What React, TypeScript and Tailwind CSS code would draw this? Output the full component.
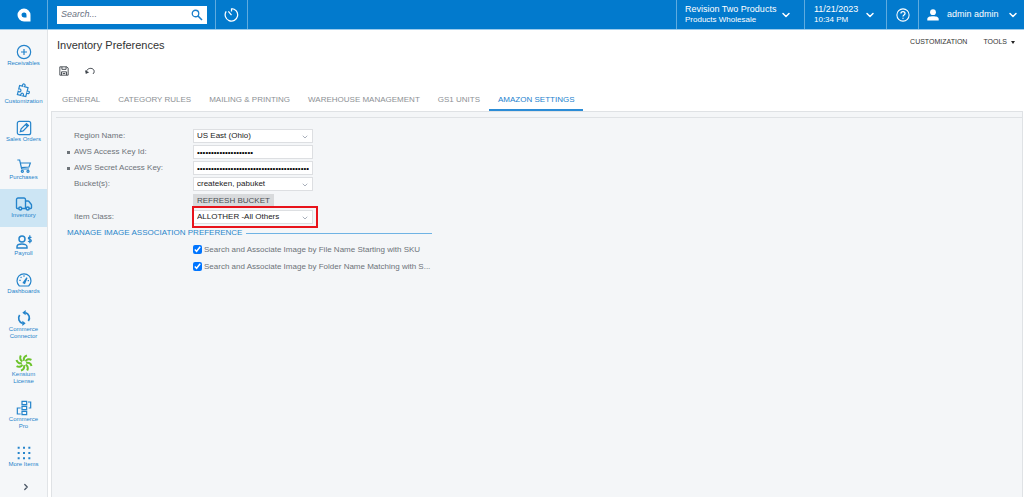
import React from "react";
import { ChevronDown, ChevronRight, Truck } from "lucide-react";

interface IconProps {
  children: React.ReactNode;
  className?: string;
}

function Icon({ children, className = "size-4" }: IconProps) {
  return (
    <svg
      viewBox="0 0 24 24"
      fill="none"
      stroke="currentColor"
      strokeWidth="1.8"
      className={className}
      aria-hidden="true"
    >
      {children}
    </svg>
  );
}

const modules = [
  {
    label: "Receivables",
    icon: (
      <Icon>
        <circle cx="12" cy="12" r="10" />
        <path d="M12 7.5v9M7.5 12h9" />
      </Icon>
    ),
  },
  {
    label: "Customization",
    icon: (
      <Icon>
        <path
          d="M4 7h4.500C6 2 14 2 11.500 7H17v5.500c5-2.500 5 5.500 0 3V21h-4.500c2.500-5-5.500-5-3 0H4v-5c5 2.500 5-6 0-3.500z"
          transform="rotate(14 12 12)"
        />
      </Icon>
    ),
  },
  {
    label: "Sales Orders",
    icon: (
      <Icon>
        <rect x="2" y="2" width="20" height="20" rx="3" />
        <path d="M6.5 17.5l1.2-4.2 8-8 3 3-8 8z" />
        <path d="M14.5 6.5l3 3" strokeWidth="3" />
      </Icon>
    ),
  },
  {
    label: "Purchases",
    icon: (
      <Icon>
        <path d="M2 3h3.5l3 13.5h11M6.5 7.5h15l-2 6-11.5 1" />
        <circle cx="9.5" cy="20" r="1.6" />
        <circle cx="18" cy="20" r="1.6" />
      </Icon>
    ),
  },
  {
    label: "Inventory",
    active: true,
    icon: <Truck className="size-[18px]" strokeWidth={1.8} />,
  },
  {
    label: "Payroll",
    icon: (
      <Icon>
        <circle cx="9" cy="7.5" r="4.5" strokeWidth="2.2" />
        <path d="M1.5 21v-2c0-3 4-4 7.500-4s7.500 1 7.500 4v2z" strokeWidth="2.2" />
        <path d="M23 5.500c-.5-1.200-4.500-1.500-4.500.7 0 2.500 4.500 1.300 4.500 3.800 0 2.300-4 2-4.800.6M20.700 2v12" />
      </Icon>
    ),
  },
  {
    label: "Dashboards",
    icon: (
      <Icon>
        <path d="M5 21a10.500 10.500 0 1 1 14 0z" />
        <path d="M11 16l5.500-7.500L13 17z" />
        <path d="M12 5v2M5 12.500h2M17.500 13h2M7 7.500l1.200 1.200" />
      </Icon>
    ),
  },
  {
    label: "Commerce Connector",
    icon: (
      <Icon>
        <path d="M10 20A8 8 0 0 1 5.500 7.500M14 4A8 8 0 0 1 18.500 16.500" strokeWidth="2.6" />
        <path d="M14.500 0v8L9.500 4zM9.500 24v-8l5 4z" fill="currentColor" stroke="none" />
      </Icon>
    ),
  },
  {
    label: "Kensium License",
    icon: (
      <Icon className="size-[18px] text-[#6cc32c]">
        {[0, 45, 90, 135, 180, 225, 270, 315].map((angle) => (
          <path
            key={angle}
            d="M12 9C11 6 12.500 3 16 2"
            strokeWidth="2.7"
            transform={`rotate(${angle} 12 12)`}
          />
        ))}
      </Icon>
    ),
  },
  {
    label: "Commerce Pro",
    icon: (
      <Icon>
        <path d="M9 2h7v5H9zM9 9.500h7v5H9zM9 17h7v5H9z" />
        <path d="M18 3h4v9h-3M7 12H2v9h5" />
      </Icon>
    ),
  },
  {
    label: "More Items",
    icon: (
      <Icon>
        {[4, 12, 20].map((y) => (
          <path key={y} d={`M2.5 ${y}h3M10.5 ${y}h3M18.5 ${y}h3`} strokeWidth="3" />
        ))}
      </Icon>
    ),
  },
];

const tabs = [
  "GENERAL",
  "CATEGORY RULES",
  "MAILING & PRINTING",
  "WAREHOUSE MANAGEMENT",
  "GS1 UNITS",
  "AMAZON SETTINGS",
];

function TopBar() {
  return (
    <header className="flex h-[30px] shrink-0 border-b border-[#9ccbec] bg-[#027acd] text-[9px] text-white">
      <a href="#home" aria-label="Home" className="flex w-[47px] items-center justify-center">
        <svg viewBox="0 0 14 14" className="size-3.5" aria-hidden="true">
          <path
            fill="#fff"
            fillRule="evenodd"
            d="M7 .5A6.500 6.500 0 0 0 7 13.500h6.500V7A6.500 6.500 0 0 0 7 .5zM7 4.500h.5A2.300 2.300 0 0 1 9.500 7v2.500H7a2.500 2.500 0 0 1 0-5z"
          />
        </svg>
      </a>
      <div className="flex items-center border-l border-[#5fabdf] pr-2 pl-[9px]">
        <label className="flex h-[18px] w-[150px] items-center bg-white pr-1 pl-1">
          <input
            type="search"
            aria-label="Search"
            placeholder="Search..."
            className="min-w-0 flex-1 text-[9px] text-gray-700 italic outline-none placeholder:text-gray-500"
          />
          <Icon className="size-3 text-[#1b7fcb]">
            <circle cx="9" cy="9" r="6.5" strokeWidth="2.6" />
            <path d="M14 14l8 8" strokeWidth="3.2" />
          </Icon>
        </label>
      </div>
      <button
        type="button"
        aria-label="Recent"
        className="flex w-[33px] items-center justify-center border-x border-[#5fabdf]"
      >
        <Icon className="size-[15px]">
          <path d="M12 2.500a10 10 0 1 1-8.500 4.500M12 2.500V7M12 13L7 7" strokeWidth="2" />
        </Icon>
      </button>
      <div className="ml-auto flex">
        <button
          type="button"
          className="flex w-32 items-center gap-1 border-l border-[#5fabdf] pl-2 text-left"
        >
          <span className="leading-[11px]">
            Revision Two Products
            <span className="block text-[8px] leading-[10px]">Products Wholesale</span>
          </span>
          <ChevronDown className="size-3" strokeWidth={3} />
        </button>
        <button
          type="button"
          className="flex w-[82px] items-center gap-1.5 border-l border-[#5fabdf] pl-[9px] text-left"
        >
          <span className="leading-[11px]">
            11/21/2023
            <span className="block text-[8px] leading-[10px]">10:34 PM</span>
          </span>
          <ChevronDown className="size-3" strokeWidth={3} />
        </button>
        <button
          type="button"
          aria-label="Help"
          className="flex w-8 items-center justify-center border-l border-[#5fabdf]"
        >
          <Icon className="size-3.5">
            <circle cx="12" cy="12" r="10.5" />
            <path d="M8.500 9.500c0-4.500 7-4.500 7 0 0 2.500-3.500 2.500-3.500 5M12 16.500v2" strokeWidth="2.2" />
          </Icon>
        </button>
        <button
          type="button"
          className="flex w-[106px] items-center border-l border-[#5fabdf] pl-2"
        >
          <svg viewBox="0 0 12 12" className="mr-2 size-3" fill="currentColor" aria-hidden="true">
            <circle cx="6" cy="3.2" r="2.9" />
            <path d="M.3 11.500V10C.3 8 3 7.300 6 7.300s5.700.7 5.700 2.700v1.500z" />
          </svg>
          admin admin
          <ChevronDown className="ml-2 size-3" strokeWidth={3} />
        </button>
      </div>
    </header>
  );
}

function Sidebar() {
  return (
    <nav className="flex w-12 shrink-0 flex-col border-r border-[#e1e4e7] bg-[#f5f7f9] pt-[7px]">
      {modules.map((item) => (
        <a
          key={item.label}
          href="#module"
          className={
            item.active
              ? "flex flex-col items-center bg-[#cce5f4] px-1 pt-[7px] pb-2 text-center text-[6px] leading-[7px] text-[#2584cb]"
              : "flex flex-col items-center px-1 pt-[7px] pb-2 text-center text-[6px] leading-[7px] text-[#2584cb]"
          }
        >
          <span className="flex h-4 items-center">{item.icon}</span>
          {item.label}
        </a>
      ))}
      <button type="button" aria-label="Expand menu" className="mx-auto pt-1.5 pl-1 text-gray-600">
        <ChevronRight className="size-2.5" strokeWidth={3} />
      </button>
    </nav>
  );
}

interface FieldProps {
  id: string;
  label: string;
  required?: boolean;
  children: React.ReactNode;
}

function Field({ id, label, required, children }: FieldProps) {
  return (
    <div className="flex h-4 items-center">
      <label htmlFor={id} className="flex w-[126px] items-center text-[#6d7378]">
        <span className="w-[7px]">
          {required && <span className="block size-[3px] bg-[#6d7378]" />}
        </span>
        {label}
      </label>
      {children}
    </div>
  );
}

function Select({ id, value }: { id: string; value: string }) {
  return (
    <div className="relative w-[120px]">
      <select
        id={id}
        className="block h-3.5 w-full appearance-none border border-[#dddfe2] bg-white pr-3 pl-[3px] text-[8px] leading-3 text-[#222]"
      >
        <option>{value}</option>
      </select>
      <ChevronDown
        className="pointer-events-none absolute top-1 right-1 size-2 text-gray-400"
        strokeWidth={2.5}
      />
    </div>
  );
}

function Password({ id, value }: { id: string; value: string }) {
  return (
    <input
      id={id}
      type="password"
      defaultValue={value}
      className="block h-3.5 w-[120px] border border-[#dddfe2] bg-white px-[3px] text-[8px] leading-3 text-black"
    />
  );
}

function AmazonSettings() {
  return (
    <form className="mt-[5px] ml-1 border-t border-[#dfe2e5] pt-[10px] pl-[11px] text-[8px]">
      <Field id="region" label="Region Name:">
        <Select id="region" value="US East (Ohio)" />
      </Field>
      <Field id="access-key" label="AWS Access Key Id:" required>
        <Password id="access-key" value="AKIA0000000000000000" />
      </Field>
      <Field id="secret-key" label="AWS Secret Access Key:" required>
        <Password id="secret-key" value="0000000000000000000000000000000000000000" />
      </Field>
      <Field id="buckets" label="Bucket(s):">
        <Select id="buckets" value="createken, pabuket" />
      </Field>
      <button
        type="button"
        className="mb-px ml-[126px] block h-4 border-t-2 border-[#f4f6f8] bg-[#d8dadc] px-1 text-[#4b5054]"
      >
        REFRESH BUCKET
      </button>
      <div className="relative">
        <Field id="item-class" label="Item Class:">
          <Select id="item-class" value="ALLOTHER -All Others" />
        </Field>
        <div className="pointer-events-none absolute -top-[3px] left-[125px] h-[22px] w-[126px] border-2 border-[#e8131b]" />
      </div>
      <fieldset className="w-[365px] min-w-0">
        <legend className="flex h-4 w-full items-center gap-1 text-[#2b86cb]">
          MANAGE IMAGE ASSOCIATION PREFERENCE
          <span className="h-px flex-1 bg-[#6fb3e4]" />
        </legend>
        <label className="ml-[126px] flex h-[17px] items-center gap-0.5 whitespace-nowrap text-[#6d7378]">
          <input type="checkbox" defaultChecked className="size-[9px] shrink-0 accent-[#0075ff]" />
          Search and Associate Image by File Name Starting with SKU
        </label>
        <label className="ml-[126px] flex h-[17px] items-center gap-0.5 whitespace-nowrap text-[#6d7378]">
          <input type="checkbox" defaultChecked className="size-[9px] shrink-0 accent-[#0075ff]" />
          Search and Associate Image by Folder Name Matching with S...
        </label>
      </fieldset>
    </form>
  );
}

export default function App() {
  return (
    <div className="flex min-h-screen flex-col bg-white font-['Liberation_Sans',Arial,sans-serif]">
      <TopBar />
      <div className="flex flex-1">
        <Sidebar />
        <main className="flex min-w-0 flex-1 flex-col pr-px pl-[3px]">
          <div className="flex justify-between pt-2 pr-2 pl-1.5">
            <h1 className="text-[11px] leading-[14px] text-[#333]">Inventory Preferences</h1>
            <div className="flex items-start gap-4 text-[7px] leading-[8px] text-[#333]">
              <button type="button">CUSTOMIZATION</button>
              <button type="button" className="flex items-center gap-1">
                TOOLS
                <span className="border-x-2 border-t-[3px] border-x-transparent border-t-[#222]" />
              </button>
            </div>
          </div>
          <div className="flex gap-4 pt-3.5 pl-2 text-[#3f454c]">
            <button type="button" aria-label="Save">
              <Icon className="size-2.5">
                <path d="M2 2h17l3 3v17H2zM7 2v6h10V2M6 22v-8h12v8M9 18h6" strokeWidth="2.2" />
              </Icon>
            </button>
            <button type="button" aria-label="Undo">
              <Icon className="size-2.5">
                <path d="M3 14C6 2 22 4 22 13c0 3-1 5-3 6" strokeWidth="2.4" />
                <path d="M0 10l2 9 8-4z" fill="currentColor" stroke="none" />
              </Icon>
            </button>
          </div>
          <div role="tablist" className="mt-3 flex pl-0.5 text-[8px] leading-[10px]">
            {tabs.map((tab) => (
              <button
                key={tab}
                type="button"
                role="tab"
                aria-selected={tab === "AMAZON SETTINGS"}
                className={
                  tab === "AMAZON SETTINGS"
                    ? "border-b-2 border-[#2b8cd6] px-[9px] pt-[7px] pb-1 text-[#2482ce]"
                    : "border-b-2 border-transparent px-[9px] pt-[7px] pb-1 text-[#8d9195]"
                }
              >
                {tab}
              </button>
            ))}
          </div>
          <section className="flex-1 border-x border-t border-[#dfe2e5] bg-[#f4f6f8]">
            <AmazonSettings />
          </section>
        </main>
      </div>
    </div>
  );
}
